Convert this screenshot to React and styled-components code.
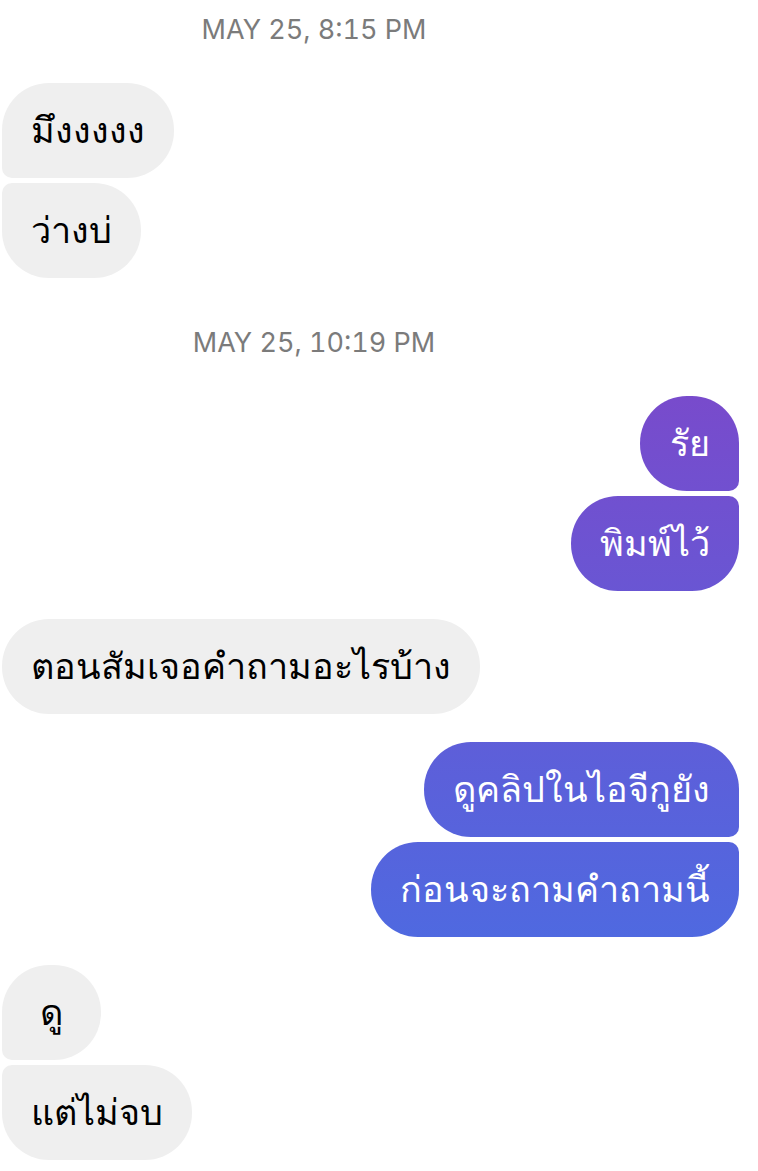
import styled, { createGlobalStyle } from 'styled-components';

const messages = [
  { time: 'MAY 25, 8:15 PM' },
  { from: 'them', texts: ['มึงงงงง', 'ว่างบ่'] },
  { time: 'MAY 25, 10:19 PM' },
  { from: 'me', texts: ['รัย', 'พิมพ์ไว้'] },
  { from: 'them', texts: ['ตอนสัมเจอคำถามอะไรบ้าง'] },
  { from: 'me', texts: ['ดูคลิปในไอจีกูยัง', 'ก่อนจะถามคำถามนี้'] },
  { from: 'them', texts: ['ดู', 'แต่ไม่จบ'] },
];

const GlobalStyle = createGlobalStyle`
  body {
    margin: 0;
    background: #fff;
  }
`;

const Chat = styled.main`
  display: flex;
  flex-direction: column;
  gap: 28px;
  padding: 0 19px 11px 2px;
`;

const Time = styled.time`
  padding: 19px 113px 7px 0;
  text-align: center;
  font: 400 27px/36px Inter, sans-serif;
  font-variant-numeric: tabular-nums;
  color: #7b7b7b;

  &:first-child {
    padding-top: 12px;
  }
`;

const Group = styled.section`
  display: flex;
  flex-direction: column;
  align-items: flex-start;
  gap: 5px;
`;

const Bubble = styled.p`
  box-sizing: border-box;
  min-width: 99px;
  margin: 0;
  padding: 24px 29px 23px;
  border-radius: 47px;
  font: 400 36px/48px 'Liberation Sans', sans-serif;
  text-align: center;
  color: #000;
  background: #efefef;

  &:not(:last-child) {
    border-bottom-left-radius: 10px;
  }

  &:not(:first-child) {
    border-top-left-radius: 10px;
  }
`;

const SentGroup = styled(Group)`
  align-items: flex-end;
`;

/* the gradient belongs to the window, so bubbles change colour as they scroll */
const SentBubble = styled(Bubble)`
  color: #fff;
  background: linear-gradient(#784bcc 34%, #4f69e0 80%) fixed;

  &:not(:last-child) {
    border-bottom-left-radius: 47px;
    border-bottom-right-radius: 10px;
  }

  &:not(:first-child) {
    border-top-left-radius: 47px;
    border-top-right-radius: 10px;
  }
`;

function MessageGroup({ from, texts }) {
  const Wrap = from === 'me' ? SentGroup : Group;
  const Item = from === 'me' ? SentBubble : Bubble;
  return (
    <Wrap>
      {texts.map((text) => (
        <Item key={text} lang="th">{text}</Item>
      ))}
    </Wrap>
  );
}

export default function App() {
  return (
    <Chat>
      <GlobalStyle />
      {messages.map((m, i) =>
        m.time ? <Time key={i}>{m.time}</Time> : <MessageGroup key={i} {...m} />
      )}
    </Chat>
  );
}
